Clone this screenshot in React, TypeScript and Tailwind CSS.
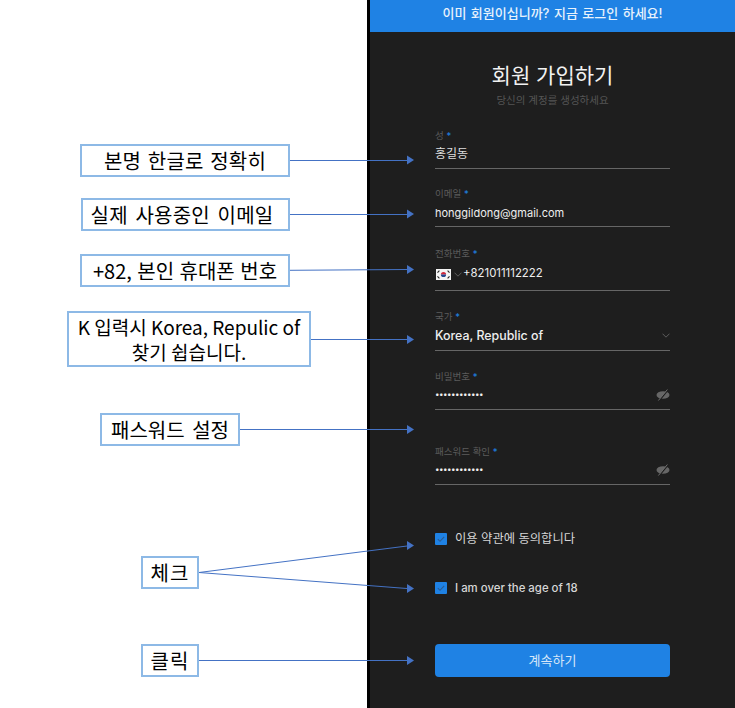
const FONT = "font-[Inter,'Noto_Sans_CJK_KR',sans-serif]";

// 주석 박스: 왼쪽 캔버스 위의 좌표 자체가 내용
const callouts = [
  { text: "본명 한글로 정확히", cls: "left-[80px] top-[144px] w-[210px] h-[33px] text-[20px] tracking-[0.2px] [word-spacing:2px]" },
  { text: "실제 사용중인 이메일", cls: "left-[81px] top-[198px] w-[209px] h-[33px] pr-[7px] text-[20px] tracking-[0.2px] [word-spacing:3px]" },
  { text: "+82, 본인 휴대폰 번호", cls: "left-[80px] top-[254px] w-[210px] h-[33px] text-[20px] [word-spacing:1px]" },
  { text: "K 입력시 Korea, Repulic of\n찾기 쉽습니다.", cls: "left-[67px] top-[311px] w-[244px] h-[56px] leading-[25px] text-[19px]" },
  { text: "패스워드 설정", cls: "left-[100px] top-[413px] w-[140px] h-[33px] text-[20px] [word-spacing:3px]" },
  { text: "체크", cls: "left-[141px] top-[556px] w-[58px] h-[33px] text-[20px] tracking-[1px]" },
  { text: "클릭", cls: "left-[141px] top-[644px] w-[58px] h-[33px] text-[20px] tracking-[1px]" },
];

const arrows = [
  "M290 160.5H407",
  "M290 214.5H407",
  "M290 270.3L407 269.5",
  "M311 339.5H407",
  "M240 429.5H407",
  "M199 572.5L407 546",
  "M199 572.5L407 588.5",
  "M199 660.5H407",
];

const heads = ["407,155.5 414,160 407,164.5", "407,209.5 414,214 407,218.5", "407,265 414,269.5 407,274", "407,335 414,339.5 407,344", "407,425 414,429.5 407,434", "407,541 414,545.5 407,550", "407,584 414,588.5 407,593", "407,656 414,660.5 407,665"];

function EyeSlash() {
  return (
    <svg viewBox="0 0 14 12" className="h-[12px] w-[14px]" aria-hidden>
      <ellipse cx="7" cy="6" rx="6.5" ry="3.8" fill="#666666" />
      <path stroke="#1e1e1e" strokeWidth="1.2" d="M3.4 11.5L12.4 .5" />
      <path stroke="#6e6e6e" strokeWidth="1" d="M2.4 11.5L11.4 .5" />
    </svg>
  );
}

function Chevron({ className }: { className?: string }) {
  return (
    <svg viewBox="0 0 8 5" className={className} fill="none" aria-hidden>
      <path stroke="#6f6f6f" strokeWidth="0.8" d="M.5.7L4 4.2 7.5.7" />
    </svg>
  );
}

function KoreaFlag() {
  return (
    <svg viewBox="0 0 15 11" className="h-[11px] w-[15px]" aria-hidden>
      <rect width="15" height="11" fill="#f4f4f4" />
      <path fill="#d0263a" d="M4.9 5.5a2.6 2.6 0 0 1 5.2 0z" />
      <path fill="#24478f" d="M4.9 5.5a2.6 2.6 0 0 0 5.2 0z" />
      <path stroke="#222" strokeWidth="1.1" d="M1.5 3.6L3.4 1.6M11.6 1.6L13.5 3.6M1.5 7.4L3.4 9.4M11.6 9.4L13.5 7.4" />
    </svg>
  );
}

function Field({ label, gap, children }: { label: string; gap: string; children: React.ReactNode }) {
  return (
    <div className={gap}>
      <p className="h-[12px] text-[9.5px] leading-[12px] text-[#5c5c5c]">
        {label} <span className="text-[#1f82e4]">*</span>
      </p>
      {children}
    </div>
  );
}

function Check({ label, size }: { label: string; size: string }) {
  return (
    <label className={`flex items-center gap-[8px] leading-[16px] text-[#d6d6d6] ${size}`}>
      <span className="flex h-[12px] w-[12px] items-center justify-center rounded-[1px] bg-[#1f82e4]">
        <svg viewBox="0 0 12 12" className="h-[12px] w-[12px]" fill="none" aria-hidden>
          <path stroke="#2b5c93" strokeWidth="1.1" d="M2.8 6.2L5 8.3 9.2 3.8" />
        </svg>
      </span>
      {label}
    </label>
  );
}

function PasswordRow() {
  return (
    <div className="mt-[3px] flex h-[24px] items-start justify-between border-b border-[#666666] text-[8px] leading-[16px] text-[#eeeeee]">
      <span className="tracking-[-0.5px]">••••••••••••</span>
      <span className="mt-[3px]">
        <EyeSlash />
      </span>
    </div>
  );
}

export default function App() {
  return (
    <div className={`relative flex h-[708px] w-[735px] overflow-hidden bg-white ${FONT}`}>
      <div className="w-[367px] shrink-0" />
      <main className="flex w-[368px] shrink-0 flex-col border-l-[3px] border-black bg-[#1e1e1e]">
        <div className="flex h-[32px] items-center justify-center bg-[#1f82e4] pb-[5px] text-[13px] font-medium text-[#e8f2fc] [word-spacing:1px]">
          이미 회원이십니까? 지금 로그인 하세요!
        </div>
        <div className="px-[65px]">
          <h1 className="mt-[30px] text-center text-[21px] leading-[28px] text-[#f2f2f2]">회원 가입하기</h1>
          <p className="mt-[4px] text-center text-[10.5px] leading-[14px] text-[#555555]">당신의 계정를 생성하세요</p>

          <Field label="성" gap="mt-[22px]">
            <div className="mt-[4px] flex h-[23px] items-start border-b border-[#666666] text-[12px] leading-[16px] text-[#dddddd]">홍길동</div>
          </Field>
          <Field label="이메일" gap="mt-[19px]">
            <div className="mt-[5px] flex h-[22px] items-start border-b border-[#666666] text-[11px] leading-[16px] text-[#eeeeee]">honggildong@gmail.com</div>
          </Field>
          <Field label="전화번호" gap="mt-[21px]">
            <div className="mt-[4px] flex h-[27px] items-start gap-[3px] border-b border-[#666666] pt-[1px] text-[11.4px] leading-[16px] text-[#eeeeee]">
              <span className="mt-[4px] ml-[1px]"><KoreaFlag /></span>
              <Chevron className="mt-[7px] h-[5px] w-[8px]" />
              <span className="-ml-[2px]">+821011112222</span>
            </div>
          </Field>
          <Field label="국가" gap="mt-[20px]">
            <div className="mt-[4px] flex h-[24px] items-start justify-between border-b border-[#666666] text-[12.4px] font-medium leading-[17px] text-[#eeeeee]">
              Korea, Republic of
              <Chevron className="mt-[6px] h-[5px] w-[8px]" />
            </div>
          </Field>
          <Field label="비밀번호" gap="mt-[20px]">
            <PasswordRow />
          </Field>
          <Field label="패스워드 확인" gap="mt-[36px]">
            <PasswordRow />
          </Field>

          <div className="mt-[46px] flex flex-col gap-[33px]">
            <Check label="이용 약관에 동의합니다" size="text-[12.3px]" />
            <Check label="I am over the age of 18" size="text-[11.4px] font-medium" />
          </div>

          <button className="mt-[48px] flex h-[33px] w-full items-center justify-center rounded-[4px] bg-[#1f82e4] text-[13px] text-[#d5e6f8]">
            계속하기
          </button>
        </div>
      </main>

      {callouts.map((c) => (
        <div
          key={c.text}
          className={`absolute flex items-center justify-center whitespace-pre-line border-2 border-[#8db9e6] bg-white text-center text-black font-['Noto_Sans_CJK_KR',sans-serif] ${c.cls}`}
        >
          {c.text}
        </div>
      ))}

      <svg className="pointer-events-none absolute left-0 top-0 h-[708px] w-[735px]" viewBox="0 0 735 708" aria-hidden>
        {arrows.map((d) => (
          <path key={d} d={d} fill="none" stroke="#4472c4" strokeWidth="1" />
        ))}
        {heads.map((p) => (
          <polygon key={p} points={p} fill="#4472c4" />
        ))}
      </svg>
    </div>
  );
}
